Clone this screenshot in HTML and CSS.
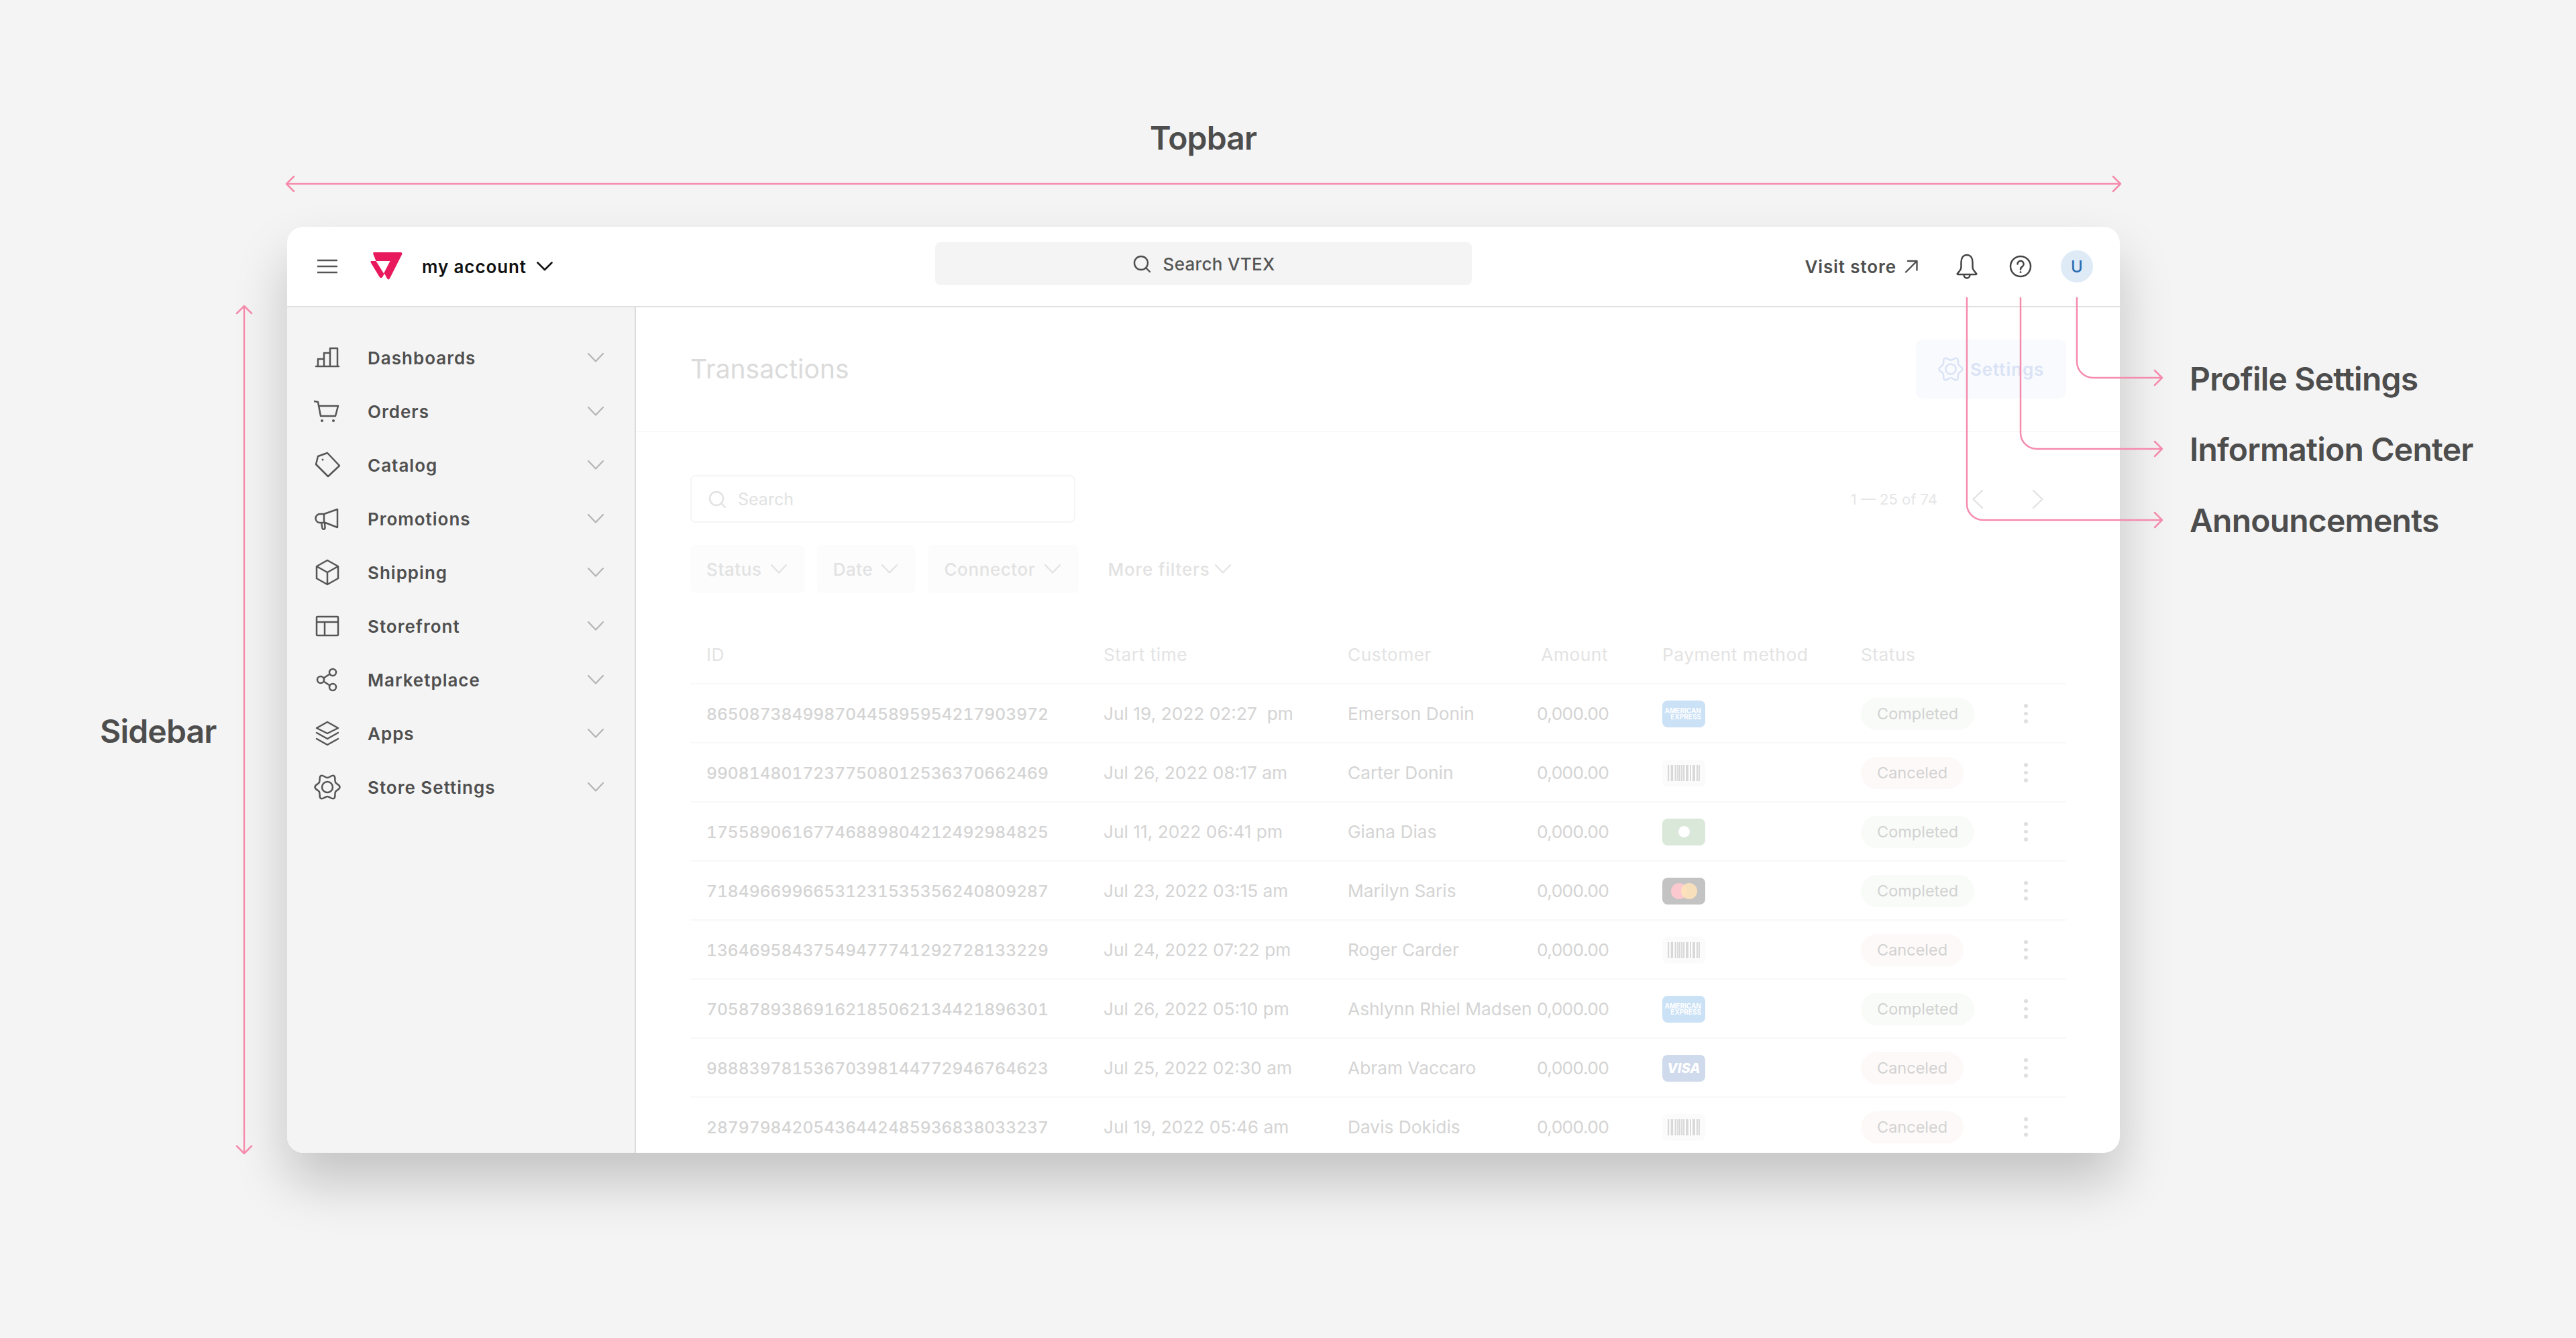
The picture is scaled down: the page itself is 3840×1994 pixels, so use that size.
FILE: index.html
```html
<!DOCTYPE html>
<html lang="en">
<head>
<meta charset="utf-8">
<title>VTEX Admin layout</title>
<link rel="stylesheet" href="styles.css">
</head>
<body>
<div class="page">
  <div class="app">
    <header class="topbar">
      <div class="top-left">
        <svg class="ic-menu" viewBox="0 0 30 22"><path d="M0 2H30M0 11H30M0 20H30"/></svg>
        <svg class="logo" viewBox="0 0 48 42"><path fill="#e9195e" d="M5 0H45Q48.800 0 47 3.500L29 39Q27 42 25 39L21 31.500L18.500 36.500Q16 40 13.500 36.500L.5 15Q0 13 2 13H8.500L4.500 3Q4 0 5 0Z"/><path fill="#fff" d="M8.500 13H29.500L20 31.500Z"/></svg>
        <span class="account">my account</span>
        <svg class="ic-acc-chev" viewBox="0 0 24 14"><path d="M1.500 1.500L12 12L22.500 1.500"/></svg>
      </div>
      <div class="top-search">
        <svg class="ic-search-top" viewBox="0 0 28 28"><circle cx="13" cy="13" r="10"/><path d="M20.500 20.500L26 26"/></svg>
        <span>Search VTEX</span>
      </div>
      <div class="top-right">
        <span class="visit">Visit store</span>
        <svg class="ic-visit" viewBox="0 0 20 20"><path d="M2 18.500L18 2.500M5 2H18.500V15.500"/></svg>
        <svg class="ic-bell" viewBox="0 0 40 40"><path d="M20 3C14 3 11.500 8 11.500 14V21C11.500 25 9 27 6 30.500Q5 32 7 32H33Q35 32 34 30.500C31 27 28.500 25 28.500 21V14C28.500 8 26 3 20 3Z"/><path d="M15.500 32.500C15.500 39 24.500 39 24.500 32.500"/></svg>
        <svg class="ic-help" viewBox="0 0 40 40"><circle cx="20" cy="20" r="15"/><path d="M15.500 16.500A4.600 4.600 0 1 1 22.500 20.400C20.800 21.400 20 22.300 20 24.500"/><circle class="solid" cx="20" cy="28.500" r="1.500"/></svg>
        <span class="avatar">U</span>
      </div>
    </header>
    <div class="body">
      <nav class="sidebar">
        <a class="nav-item"><svg class="nav-ic" viewBox="0 0 40 40"><path d="M3 33H37M6 33V22H15M15 33V13H24M24 33V6H35V33"/></svg><span>Dashboards</span><svg class="nav-chev" viewBox="0 0 24 14"><path d="M1 1L12 12.500L23 1"/></svg></a>
        <a class="nav-item"><svg class="nav-ic" viewBox="0 0 40 40"><path d="M0 5L6 6L10 27H32L36 12H7"/><circle class="solid" cx="12" cy="34" r="2"/><circle class="solid" cx="29" cy="34" r="2"/></svg><span>Orders</span><svg class="nav-chev" viewBox="0 0 24 14"><path d="M1 1L12 12.500L23 1"/></svg></a>
        <a class="nav-item"><svg class="nav-ic" viewBox="0 0 40 40"><path d="M6 7L20 2L38 21L21 37L3 19Z"/><circle class="solid" cx="13" cy="12" r="1.500"/></svg><span>Catalog</span><svg class="nav-chev" viewBox="0 0 24 14"><path d="M1 1L12 12.500L23 1"/></svg></a>
        <a class="nav-item"><svg class="nav-ic" viewBox="0 0 40 40"><path d="M35 6V33L17 26H9A6.500 6.500 0 0 1 9 13H15ZM15 13V26M11 26L12.500 34A2 2 0 0 0 16.500 33.500L16 26"/></svg><span>Promotions</span><svg class="nav-chev" viewBox="0 0 24 14"><path d="M1 1L12 12.500L23 1"/></svg></a>
        <a class="nav-item"><svg class="nav-ic" viewBox="0 0 40 40"><path d="M20 2L36 11V29L20 38L4 29V11ZM4 11L20 20L36 11M20 20V38"/></svg><span>Shipping</span><svg class="nav-chev" viewBox="0 0 24 14"><path d="M1 1L12 12.500L23 1"/></svg></a>
        <a class="nav-item"><svg class="nav-ic" viewBox="0 0 40 40"><path d="M5 6H35Q36 6 36 7V33Q36 34 35 34H5Q4 34 4 33V7Q4 6 5 6ZM4 14H36M16 14V34"/></svg><span>Storefront</span><svg class="nav-chev" viewBox="0 0 24 14"><path d="M1 1L12 12.500L23 1"/></svg></a>
        <a class="nav-item"><svg class="nav-ic" viewBox="0 0 40 40"><circle cx="28" cy="9" r="5"/><circle cx="10" cy="20" r="5"/><circle cx="28" cy="31" r="5"/><path d="M14.500 17.500L23.500 11.500M14.500 22.500L23.500 28.500"/></svg><span>Marketplace</span><svg class="nav-chev" viewBox="0 0 24 14"><path d="M1 1L12 12.500L23 1"/></svg></a>
        <a class="nav-item"><svg class="nav-ic" viewBox="0 0 40 40"><path d="M20 3L36 12L20 20L4 12ZM4 19L20 28L36 19M4 28L20 37L36 28"/></svg><span>Apps</span><svg class="nav-chev" viewBox="0 0 24 14"><path d="M1 1L12 12.500L23 1"/></svg></a>
        <a class="nav-item"><svg class="nav-ic" viewBox="0 0 40 40"><path d="M38.500 20C38.500 23.500 33.870 23.970 32.120 27C30.370 30.030 32.780 35.140 29.750 36.890C26.720 38.640 23.500 34 20 34C16.500 34 13.280 38.640 10.250 36.890C7.220 35.140 9.630 30.030 7.880 27C6.130 23.970 1.500 23.500 1.500 20C1.500 16.500 6.130 16.030 7.880 13C9.630 9.970 7.220 4.860 10.250 3.110C13.280 1.360 16.500 6 20 6C23.500 6 26.720 1.360 29.750 3.110C32.780 4.860 30.370 9.970 32.120 13C33.870 16.030 38.500 16.500 38.500 20Z"/><circle cx="20" cy="20" r="8"/></svg><span>Store Settings</span><svg class="nav-chev" viewBox="0 0 24 14"><path d="M1 1L12 12.500L23 1"/></svg></a>
      </nav>
      <main class="main">
        <div class="page-head">
          <h1 class="title">Transactions</h1>
          <div class="settings-btn">
            <svg class="ic-gear" viewBox="0 0 40 40"><path d="M38.500 20C38.500 23.500 33.870 23.970 32.120 27C30.370 30.030 32.780 35.140 29.750 36.890C26.720 38.640 23.500 34 20 34C16.500 34 13.280 38.640 10.250 36.890C7.220 35.140 9.630 30.030 7.880 27C6.130 23.970 1.500 23.500 1.500 20C1.500 16.500 6.130 16.030 7.880 13C9.630 9.970 7.220 4.860 10.250 3.110C13.280 1.360 16.500 6 20 6C23.500 6 26.720 1.360 29.750 3.110C32.780 4.860 30.370 9.970 32.120 13C33.870 16.030 38.500 16.500 38.500 20Z"/><circle cx="20" cy="20" r="8"/></svg>
            <span>Settings</span>
          </div>
        </div>
        <div class="content">
          <div class="search-row">
            <div class="search-input">
              <svg class="ic-search-faint" viewBox="0 0 28 28"><circle cx="13" cy="13" r="10"/><path d="M20.500 20.500L26 26"/></svg>
              <span>Search</span>
            </div>
            <div class="pager">
              <span class="pager-text">1 — 25 of 74</span>
              <svg class="pager-chev" viewBox="0 0 16 28"><path d="M15 1L1.500 14L15 27"/></svg>
              <svg class="pager-chev next" viewBox="0 0 16 28"><path d="M1 1L14.500 14L1 27"/></svg>
            </div>
          </div>
          <div class="filters">
            <span class="filter">Status<svg class="f-chev" viewBox="0 0 24 14"><path d="M1 1L12 12.500L23 1"/></svg></span>
            <span class="filter">Date<svg class="f-chev" viewBox="0 0 24 14"><path d="M1 1L12 12.500L23 1"/></svg></span>
            <span class="filter">Connector<svg class="f-chev" viewBox="0 0 24 14"><path d="M1 1L12 12.500L23 1"/></svg></span>
            <span class="filter plain">More filters<svg class="f-chev" viewBox="0 0 24 14"><path d="M1 1L12 12.500L23 1"/></svg></span>
          </div>
          <div class="table">
            <div class="row head">
              <span>ID</span><span>Start time</span><span>Customer</span><span class="amt">Amount</span><span class="pay">Payment method</span><span>Status</span><span></span>
            </div>
            <div class="row">
              <span class="id">86508738499870445895954217903972</span><span class="pre">Jul 19, 2022 02:27  pm</span><span>Emerson Donin</span><span class="amt val">0,000.00</span>
              <span class="pay"><span class="card amex">AMERICAN<br>EXPRESS</span></span>
              <span><span class="pill done">Completed</span></span><span class="kebab"><i></i><i></i><i></i></span>
            </div>
            <div class="row">
              <span class="id">99081480172377508012536370662469</span><span>Jul 26, 2022 08:17 am</span><span>Carter Donin</span><span class="amt val">0,000.00</span>
              <span class="pay"><span class="card boleto"><b></b></span></span>
              <span><span class="pill cancel">Canceled</span></span><span class="kebab"><i></i><i></i><i></i></span>
            </div>
            <div class="row">
              <span class="id">17558906167746889804212492984825</span><span>Jul 11, 2022 06:41 pm</span><span>Giana Dias</span><span class="amt val">0,000.00</span>
              <span class="pay"><span class="card cash"><b></b></span></span>
              <span><span class="pill done">Completed</span></span><span class="kebab"><i></i><i></i><i></i></span>
            </div>
            <div class="row">
              <span class="id">71849669966531231535356240809287</span><span>Jul 23, 2022 03:15 am</span><span>Marilyn Saris</span><span class="amt val">0,000.00</span>
              <span class="pay"><span class="card master"><b></b><b></b></span></span>
              <span><span class="pill done">Completed</span></span><span class="kebab"><i></i><i></i><i></i></span>
            </div>
            <div class="row">
              <span class="id">13646958437549477741292728133229</span><span>Jul 24, 2022 07:22 pm</span><span>Roger Carder</span><span class="amt val">0,000.00</span>
              <span class="pay"><span class="card boleto"><b></b></span></span>
              <span><span class="pill cancel">Canceled</span></span><span class="kebab"><i></i><i></i><i></i></span>
            </div>
            <div class="row">
              <span class="id">70587893869162185062134421896301</span><span>Jul 26, 2022 05:10 pm</span><span>Ashlynn Rhiel Madsen</span><span class="amt val">0,000.00</span>
              <span class="pay"><span class="card amex">AMERICAN<br>EXPRESS</span></span>
              <span><span class="pill done">Completed</span></span><span class="kebab"><i></i><i></i><i></i></span>
            </div>
            <div class="row">
              <span class="id">98883978153670398144772946764623</span><span>Jul 25, 2022 02:30 am</span><span>Abram Vaccaro</span><span class="amt val">0,000.00</span>
              <span class="pay"><span class="card visa">VISA</span></span>
              <span><span class="pill cancel">Canceled</span></span><span class="kebab"><i></i><i></i><i></i></span>
            </div>
            <div class="row">
              <span class="id">28797984205436442485936838033237</span><span>Jul 19, 2022 05:46 am</span><span>Davis Dokidis</span><span class="amt val">0,000.00</span>
              <span class="pay"><span class="card boleto"><b></b></span></span>
              <span><span class="pill cancel">Canceled</span></span><span class="kebab"><i></i><i></i><i></i></span>
            </div>
          </div>
        </div>
      </main>
    </div>
  </div>

  <svg class="callouts" viewBox="0 0 3840 1994">
    <path d="M427 274H3161M438 263L427 274L438 285M3150 263L3161 274L3150 285"/>
    <path d="M364 456V1719M353 467L364 456L375 467M353 1708L364 1719L375 1708"/>
    <path d="M3096 444V539A24 24 0 0 0 3120 563H3223M3212 552L3223 563L3212 574"/>
    <path d="M3012 444V645A24 24 0 0 0 3036 669H3223M3212 658L3223 669L3212 680"/>
    <path d="M2932 444V751A24 24 0 0 0 2956 775H3223M3212 764L3223 775L3212 786"/>
  </svg>
  <span class="callout c-top">Topbar</span>
  <span class="callout c-side">Sidebar</span>
  <span class="callout c-profile">Profile Settings</span>
  <span class="callout c-info">Information Center</span>
  <span class="callout c-ann">Announcements</span>
</div>
</body>
</html>
```

FILE: styles.css
```css
* { box-sizing: border-box; }
html, body { margin: 0; }
body { background: #f4f4f4; font-family: Inter, "Liberation Sans", sans-serif; color: #4f4f4f; overflow: hidden; }
svg { display: block; flex: none; fill: none; stroke-linecap: round; stroke-linejoin: round; }
.page { position: relative; width: 3840px; height: 1994px; padding: 338px 0 0 428px; }
.app { width: 2732px; height: 1380px; background: #fff; border-radius: 24px; overflow: hidden; box-shadow: 0 44px 80px rgba(0,0,0,.2); display: flex; flex-direction: column; }

.topbar { height: 120px; flex: none; border-bottom: 2px solid #e0e0e0; display: grid; grid-template-columns: 966px 800px 1fr; align-items: center; }
.top-left { display: flex; align-items: center; padding-left: 45px; }
.ic-menu { width: 30px; height: 22px; stroke: #555; stroke-width: 2.6; }
.logo { width: 48px; height: 42px; margin-left: 49px; }
.account { margin-left: 29px; font-size: 26px; font-weight: 600; letter-spacing: .9px; color: #111; }
.ic-acc-chev { width: 24px; height: 14px; margin-left: 15px; stroke: #111; stroke-width: 2.6; }
.top-search { height: 64px; margin-top: -8px; background: #f4f4f4; border-radius: 8px; display: flex; align-items: center; justify-content: center; gap: 18px; font-size: 26px; font-weight: 500; letter-spacing: .3px; color: #555; }
.ic-search-top { width: 28px; height: 28px; stroke: #4f4f4f; stroke-width: 2.4; }
.top-right { display: flex; align-items: center; justify-content: flex-end; padding-right: 40px; }
.visit { font-size: 26px; font-weight: 600; letter-spacing: .9px; color: #4f4f4f; }
.ic-visit { width: 20px; height: 20px; margin-left: 12px; stroke: #4f4f4f; stroke-width: 2.4; }
.ic-bell, .ic-help { width: 40px; height: 40px; stroke: #444; stroke-width: 2.5; }
.ic-bell { margin-left: 53px; }
.ic-help { margin-left: 40px; }
.solid { fill: currentColor; stroke: none; color: #555; }
.avatar { margin-left: 40px; width: 48px; height: 48px; border-radius: 50%; background: #deebf7; color: #2a6db0; font-size: 24px; font-weight: 500; display: flex; align-items: center; justify-content: center; }

.body { flex: 1; min-height: 0; display: flex; }
.sidebar { width: 520px; flex: none; background: #f4f4f4; border-right: 2px solid #dcdcdc; padding-top: 35px; }
.nav-item { height: 80px; display: flex; align-items: center; padding-left: 40px; font-size: 26px; font-weight: 600; color: #4f4f4f; letter-spacing: 1px; }
.nav-item span { margin-left: 40px; flex: 1; }
.nav-ic { width: 40px; height: 40px; stroke: #555; stroke-width: 2.5; }
.nav-chev { width: 24px; height: 14px; margin-right: 46px; stroke: #b4b4b4; stroke-width: 2.2; }

.main { flex: 1; min-width: 0; display: flex; flex-direction: column; }
.page-head { height: 186px; flex: none; border-bottom: 2px solid #f8f8f8; padding: 0 80px 0 81px; display: flex; align-items: center; justify-content: space-between; }
.title { margin: 0 0 2px; font-size: 39px; font-weight: 400; color: #dbdbdb; }
.settings-btn { width: 224px; height: 88px; background: #f8fafe; border-radius: 10px; display: flex; align-items: center; padding-left: 33px; gap: 10px; font-size: 26px; font-weight: 600; letter-spacing: .9px; color: #dae3f5; }
.ic-gear { width: 38px; height: 38px; stroke: #dae3f5; stroke-width: 2.6; }

.content { padding: 64px 80px 0 81px; }
.search-row { display: flex; justify-content: space-between; align-items: center; }
.search-input { width: 574px; height: 71px; border: 2px solid #f5f5f5; border-radius: 8px; display: flex; align-items: center; padding-left: 24px; gap: 17px; font-size: 25px; color: #e2e2e2; }
.ic-search-faint { width: 28px; height: 28px; stroke: #e2e2e2; stroke-width: 2.4; }
.pager { display: flex; align-items: center; padding-right: 34px; }
.pager-text { font-size: 22px; color: #e6e6e6; }
.pager-chev { width: 16px; height: 28px; margin-left: 52px; stroke: #e2e2e2; stroke-width: 2.4; }
.pager-chev.next { margin-left: 74px; }
.filters { display: flex; gap: 18px; margin-top: 33px; }
.filter { height: 72px; padding: 0 27px 0 24px; background: #fcfcfc; border-radius: 8px; display: flex; align-items: center; gap: 13px; font-size: 26px; font-weight: 500; letter-spacing: .6px; color: #e2e2e2; }
.filter.plain { background: none; margin-left: 26px; padding: 0; gap: 7px; letter-spacing: .8px; }
.f-chev { width: 24px; height: 14px; stroke: #e2e2e2; stroke-width: 2.2; }

.table { margin-top: 48px; }
.row { height: 88px; border-bottom: 2px solid #f8f8f8; padding: 1px 0 0 24px; display: grid; grid-template-columns: 592px 364px 282px 106px 377px 238px 16px; align-items: center; font-size: 26.3px; color: #d4d4d4; white-space: nowrap; }
.row.head { color: #e3e3e3; letter-spacing: .5px; }
.id { font-size: 24.6px; font-weight: 500; font-variant-numeric: tabular-nums; }
.pre { white-space: pre; }
.amt { text-align: right; }
.val { letter-spacing: -.6px; }
.pay { padding-left: 81px; }
.card { width: 64px; height: 40px; border-radius: 8px; display: flex; align-items: center; justify-content: center; }
.amex { background: #cbe1f6; color: #fff; font-size: 10px; line-height: 9px; letter-spacing: 0; font-weight: 700; text-align: right; padding-right: 6px; justify-content: flex-end; }
.boleto { background: #fbfbfb; }
.boleto b { display: block; width: 48px; height: 24px; background: repeating-linear-gradient(90deg, #d8d8d8 0 2px, #fff 2px 3px, #d8d8d8 3px 4px, #fff 4px 5px, #d8d8d8 5px 8px, #fff 8px 9px, #d8d8d8 9px 10px, #fff 10px 11px); }
.cash { background: #d9e8d9; }
.cash b { display: block; width: 17px; height: 17px; border-radius: 50%; background: #fff; }
.master { background: #c3c3c3; }
.master b { display: block; width: 24px; height: 24px; border-radius: 50%; background: #fcc8cf; }
.master b + b { background: rgba(253,226,187,.92); margin-left: -9px; }
.visa { background: #cfdaec; color: #fff; font-size: 20px; font-weight: 800; font-style: italic; }
.pill { display: inline-flex; align-items: center; height: 48px; padding: 0 24px; border-radius: 24px; font-size: 23.5px; color: #d2d2d2; }
.done { background: #f9fbf8; }
.cancel { background: #fdf9f8; }
.kebab { display: flex; flex-direction: column; align-items: center; gap: 6px; }
.kebab i { display: block; width: 6px; height: 5.5px; border-radius: 50%; background: #e0e0e0; }

.callouts { position: absolute; left: 0; top: 0; width: 3840px; height: 1994px; pointer-events: none; stroke: #f58bad; stroke-width: 2.5; }
.callout { position: absolute; font-size: 48px; font-weight: 600; letter-spacing: -.8px; color: #4d4d4d; line-height: 60px; white-space: nowrap; }
.c-top { left: 1714px; top: 176px; }
.c-side { left: 149px; top: 1060px; }
.c-profile { left: 3264px; top: 535px; }
.c-info { left: 3264px; top: 640px; }
.c-ann { left: 3264px; top: 746px; }
```
